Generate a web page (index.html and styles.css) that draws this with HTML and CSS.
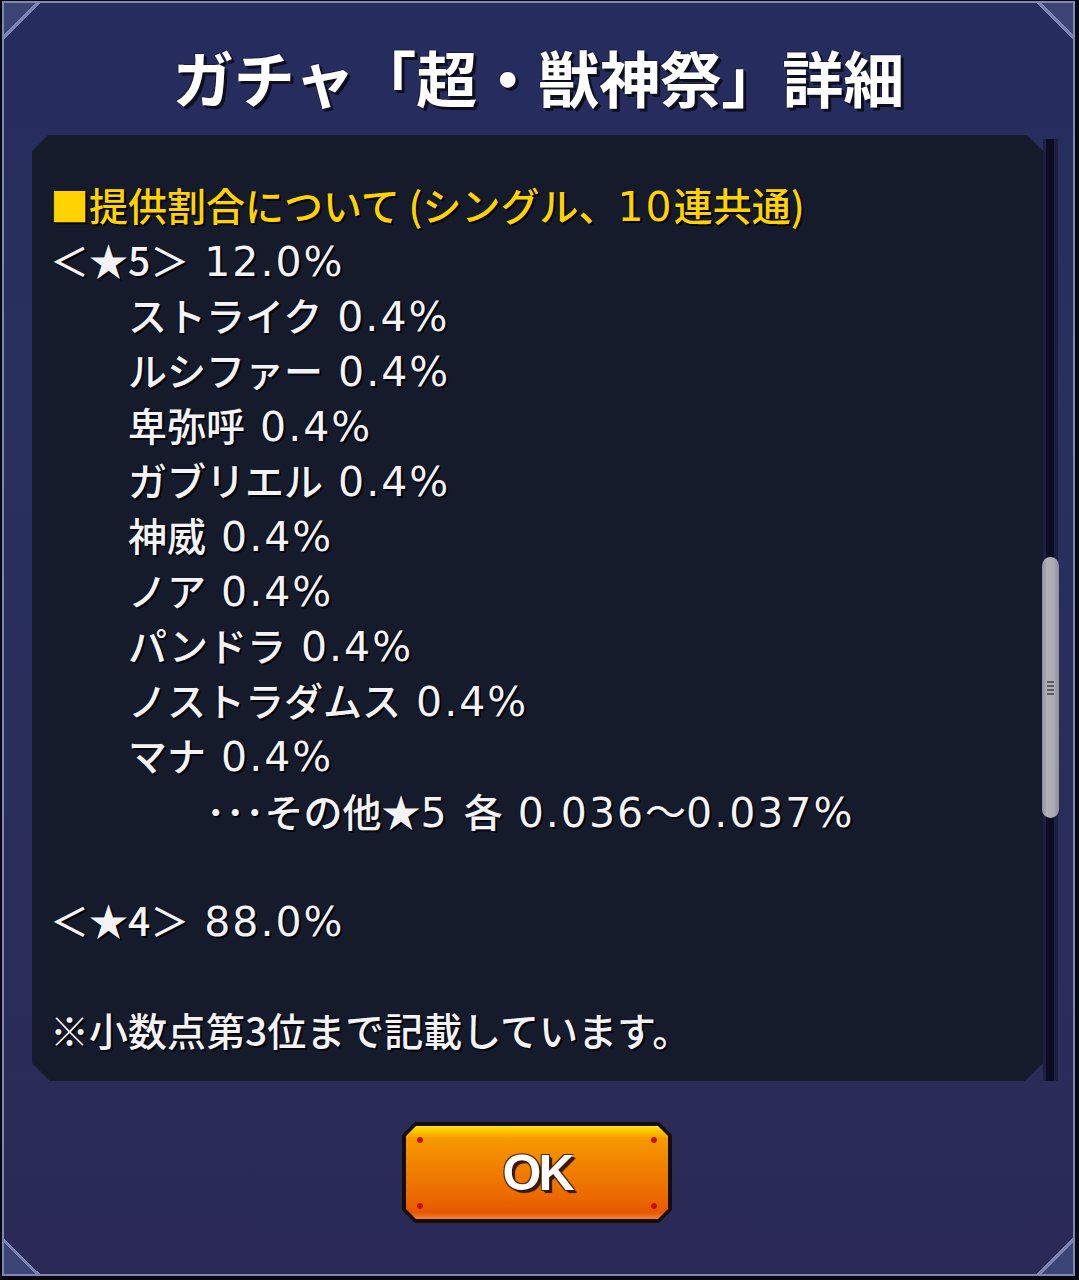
FILE: index.html
```html
<!DOCTYPE html>
<html lang="ja">
<head>
<meta charset="utf-8">
<title>ガチャ「超・獣神祭」詳細</title>
<link rel="stylesheet" href="styles.css">
</head>
<body>
<div class="frame">
  <span class="corner tl"></span>
  <span class="corner tr"></span>
  <span class="corner bl"></span>
  <span class="corner br"></span>
  <h1 class="title">ガチャ「超・獣神祭」詳細</h1>
  <div class="main">
    <div class="content">
      <div class="line gold">■提供割合について (シングル、<span class="num">10</span>連共通)</div>
      <div class="line">＜★5＞<span class="num"> 12.0%</span></div>
      <div class="line ind1">ストライク<span class="num"> 0.4%</span></div>
      <div class="line ind1">ルシファー<span class="num"> 0.4%</span></div>
      <div class="line ind1">卑弥呼<span class="num"> 0.4%</span></div>
      <div class="line ind1">ガブリエル<span class="num"> 0.4%</span></div>
      <div class="line ind1">神威<span class="num"> 0.4%</span></div>
      <div class="line ind1">ノア<span class="num"> 0.4%</span></div>
      <div class="line ind1">パンドラ<span class="num"> 0.4%</span></div>
      <div class="line ind1">ノストラダムス<span class="num"> 0.4%</span></div>
      <div class="line ind1">マナ<span class="num"> 0.4%</span></div>
      <div class="line ind2">･･･その他★<span class="num">5 </span>各<span class="num"> 0.036</span><span class="num wave">～</span><span class="num">0.037%</span></div>
      <div class="line blank"></div>
      <div class="line">＜★4＞<span class="num"> 88.0%</span></div>
      <div class="line blank"></div>
      <div class="line">※小数点第3位まで記載しています。</div>
    </div>
    <div class="scroll">
      <div class="thumb"><span class="grip"></span></div>
    </div>
  </div>
  <div class="actions">
    <button class="ok" type="button"><span class="ok-face">OK</span></button>
  </div>
</div>
</body>
</html>
```

FILE: styles.css
```css
html, body {
  margin: 0;
  padding: 0;
}
body {
  width: 1079px;
  height: 1280px;
  overflow: hidden;
  background: #07070d;
  font-family: "Noto Sans CJK JP", "Noto Sans", sans-serif;
}
.frame {
  position: relative;
  margin: 1px 0 0 2px;
  width: 1073px;
  height: 1275px;
  box-sizing: border-box;
  border: 2px solid #7e87b3;
  background: linear-gradient(#252c5e 0%, #28305e 30%, #2b2a56 100%);
  display: flex;
  flex-direction: column;
  align-items: center;
}
.corner {
  position: absolute;
  width: 36px;
  height: 36px;
  pointer-events: none;
}
.corner.tl {
  left: 0;
  top: 0;
  background: linear-gradient(135deg, #3b4474 0 44%, #7c85b2 44% 50%, transparent 50%);
}
.corner.tr {
  right: 0;
  top: 0;
  background: linear-gradient(225deg, #3b4474 0 44%, #7c85b2 44% 50%, transparent 50%);
}
.corner.bl {
  left: 0;
  bottom: 0;
  background: linear-gradient(45deg, #3b4474 0 44%, #7c85b2 44% 50%, transparent 50%);
}
.corner.br {
  right: 0;
  bottom: 0;
  background: linear-gradient(315deg, #3b4474 0 44%, #7c85b2 44% 50%, transparent 50%);
}
.title {
  margin: 43px 0 0 0;
  padding: 0;
  height: 61px;
  font-size: 61px;
  line-height: 61px;
  font-weight: 700;
  color: #ffffff;
  letter-spacing: 0;
  text-shadow: 3px 3px 0 #0d0f1c, 2px 2px 1px #0d0f1c, -1px -1px 0 rgba(20,22,40,0.6);
}
.main {
  align-self: stretch;
  display: flex;
  margin: 28px 15px 0 28px;
  height: 946px;
}
.content {
  flex: 1;
  box-sizing: border-box;
  padding: 42px 18px 0 18px;
  background: #161b2c;
  clip-path: polygon(16px 0, calc(100% - 16px) 0, 100% 16px, 100% calc(100% - 18px), calc(100% - 18px) 100%, 18px 100%, 0 calc(100% - 18px), 0 16px);
}
.line {
  height: 55px;
  line-height: 55px;
  font-size: 39px;
  font-weight: 500;
  color: #f3f3f5;
  white-space: nowrap;
  text-shadow: 2px 2px 0 #05060c, 1px 1px 1px #05060c, -1px 0 0 rgba(5,6,12,0.6);
}
.num {
  font-family: "DejaVu Sans", "Noto Sans CJK JP", sans-serif;
  font-size: 41px;
  font-weight: 400;
  letter-spacing: 2px;
}
.num.wave {
  font-family: "Noto Sans CJK JP", sans-serif;
  letter-spacing: 0;
}
.line.gold {
  color: #ffd300;
}
.line.ind1 {
  padding-left: 78px;
}
.line.ind2 {
  padding-left: 156px;
}
.scroll {
  position: relative;
  width: 15px;
  margin-top: 4px;
  background: linear-gradient(90deg, #1b2040 0 3px, #0b0e22 3px 11px, #1b2040 11px 15px);
}
.thumb {
  position: absolute;
  left: -1px;
  top: 418px;
  width: 17px;
  height: 261px;
  border-radius: 9px;
  background: linear-gradient(90deg, #8e909c 0, #b0b1ba 30%, #a9aab3 70%, #8a8c98 100%);
  display: flex;
  align-items: center;
  justify-content: center;
}
.grip {
  width: 7px;
  height: 14px;
  background: repeating-linear-gradient(0deg, #5a5c66 0 2px, transparent 2px 4px);
}
.actions {
  margin-top: 41px;
  display: flex;
  justify-content: center;
  width: 100%;
}
.ok {
  width: 270px;
  height: 101px;
  padding: 4px;
  margin: 0 0 0 -3px;
  box-sizing: border-box;
  border: none;
  background: #140e08;
  clip-path: polygon(13px 0, calc(100% - 13px) 0, 100% 13px, 100% calc(100% - 13px), calc(100% - 13px) 100%, 13px 100%, 0 calc(100% - 13px), 0 13px);
  cursor: pointer;
}
.ok-face {
  display: flex;
  align-items: center;
  justify-content: center;
  height: 100%;
  clip-path: polygon(10px 0, calc(100% - 10px) 0, 100% 10px, 100% calc(100% - 10px), calc(100% - 10px) 100%, 10px 100%, 0 calc(100% - 10px), 0 10px);
  background:
    radial-gradient(circle at 14px 14px, #c4120e 0 2.5px, transparent 3.5px),
    radial-gradient(circle at calc(100% - 14px) 14px, #c4120e 0 2.5px, transparent 3.5px),
    radial-gradient(circle at 14px calc(100% - 13px), #c4120e 0 2.5px, transparent 3.5px),
    radial-gradient(circle at calc(100% - 14px) calc(100% - 13px), #c4120e 0 2.5px, transparent 3.5px),
    linear-gradient(#ffe21a 0, #ffc400 6%, #f89a00 13%, #f28400 40%, #ec6a00 75%, #e65800 93%, #f2813a 100%);
  color: #ffffff;
  font-family: "Liberation Sans", Arial, sans-serif;
  font-weight: 700;
  font-size: 50px;
  letter-spacing: -3px;
  text-shadow: 2px 2px 0 #3a1a00, -1px -1px 0 #5a2a00, 1px -1px 0 #5a2a00, -1px 1px 0 #5a2a00, 3px 3px 1px #2a1000;
}
```
